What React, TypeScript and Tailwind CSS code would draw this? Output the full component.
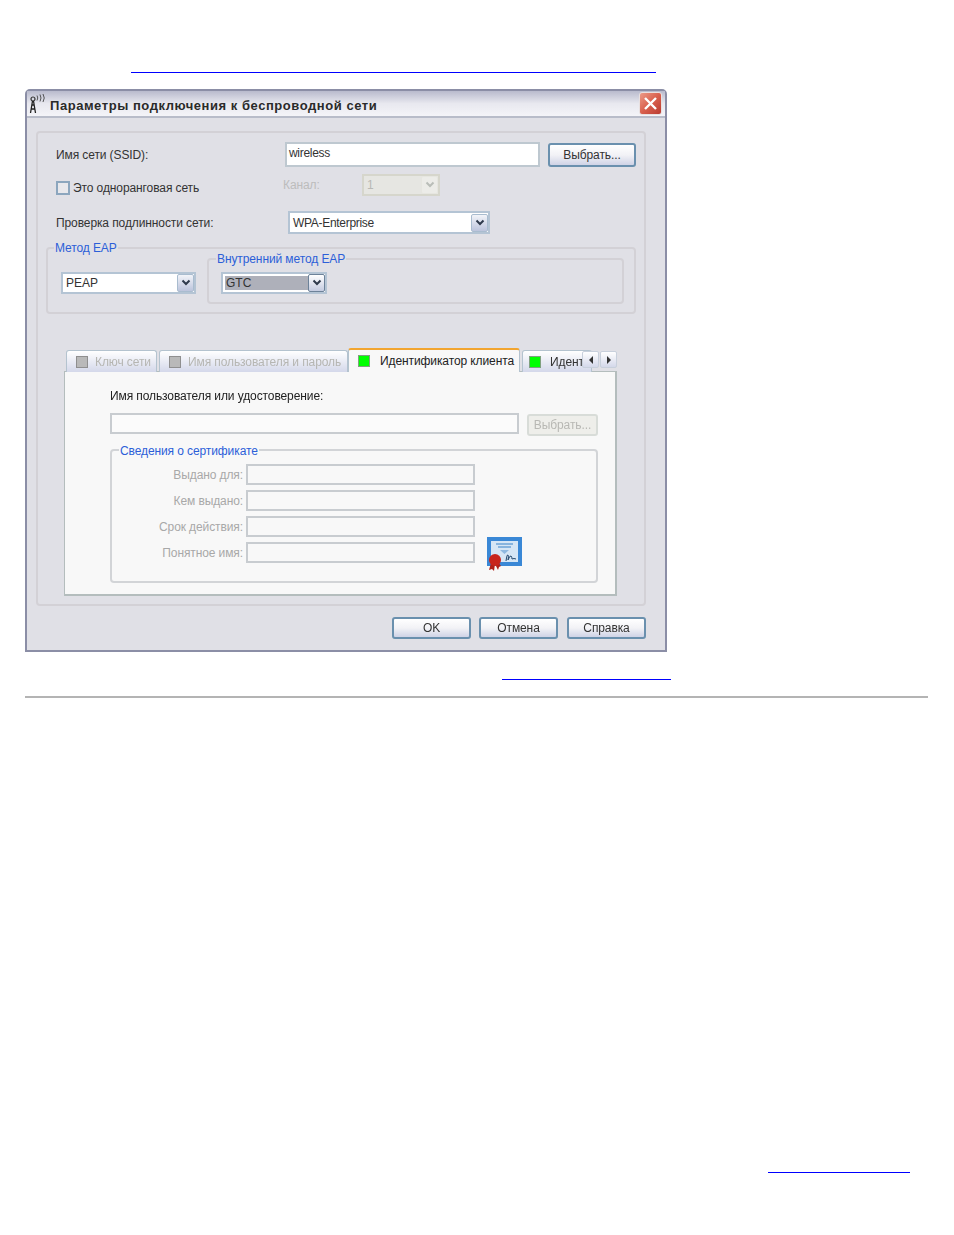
import type { ReactNode } from 'react';

function ComboBox({ value, width, disabled, selected }: { value: ReactNode; width: string; disabled?: boolean; selected?: boolean }) {
  return (
    <div className={`${width} h-full flex items-center p-[2px] border-2 ${disabled ? 'border-[#d6d6cc] bg-[#e6e6e2]' : 'border-[#b4c4d4] bg-white'}`}>
      <div className={`flex-1 h-full flex items-center pl-[1px] text-[12px] tracking-normal ${disabled ? 'text-[#b8b8b4]' : 'text-[#333]'} ${selected ? 'bg-[#aeb0ba]' : ''}`}>
        {value}
      </div>
      <div className={`w-[17px] h-[18px] -mr-[2px] flex items-center justify-center rounded-[2px] border ${disabled ? 'border-[#e6e6e0] bg-[#ecece8]' : selected ? 'border-[#6d8299] bg-gradient-to-b from-white to-[#c4cbe0]' : 'border-[#a9bccf] bg-gradient-to-b from-[#f2f4f9] to-[#bcc4dc]'}`}>
        <svg width="10" height="8" viewBox="0 0 10 8" fill="none" stroke={disabled ? '#b9bdb8' : '#2f3a4c'} strokeWidth="2">
          <path d="M1.500 1.500 5 5l3.500-3.500" />
        </svg>
      </div>
    </div>
  );
}

function PushButton({ label, width, height = 'h-[22px]' }: { label: string; width: string; height?: string }) {
  return (
    <button className={`${width} ${height} rounded-[3px] border-2 border-[#6a90ae] bg-gradient-to-b from-white via-[#f2f2f6] to-[#cfd3e6] text-[12px] text-[#333] flex items-center justify-center`}>
      {label}
    </button>
  );
}

function GroupBox({ title, className, titleClass = '-top-[9px] left-[6px]', children }: { title: string; className: string; titleClass?: string; children?: ReactNode }) {
  return (
    <div className={`relative shrink-0 rounded-[4px] border-2 ${className}`}>
      <span className={`absolute ${titleClass} px-[1px] bg-inherit text-[12px] leading-[16px] text-[#2c5fd8] whitespace-nowrap`}>{title}</span>
      {children}
    </div>
  );
}

function Tab({ label, width, on }: { label: string; width: string; on?: boolean }) {
  return (
    <div className={`${width} h-[22px] shrink-0 flex items-center rounded-t-[3px] border border-b-0 border-[#b4c3cf] bg-gradient-to-b from-white to-[#d4d8ea] text-[12px] whitespace-nowrap overflow-hidden ${on ? 'pl-[6px] text-[#333]' : 'pl-[9px] text-[#b6b6b2]'}`}>
      <span className={`w-[12px] h-[12px] shrink-0 border ${on ? 'bg-[#00ff00] border-[#7fa07f]' : 'bg-[#b9b9b9] border-[#8f8f8f]'}`} />
      <span className={on ? 'ml-[9px]' : 'ml-[7px]'}>{label}</span>
    </div>
  );
}

function CertField({ label }: { label: string }) {
  return (
    <div className="flex h-[21px] items-center">
      <span className="w-[131px] text-right text-[12px] text-[#a8a8a8]">{label}</span>
      <div className="ml-[3px] w-[229px] h-full border-2 border-[#c8ccd0] bg-[#f8f8f8]" />
    </div>
  );
}

export default function App() {
  return (
    <div className="w-[954px] h-[1235px] bg-white flex flex-col items-start tracking-[-0.1px] font-['Liberation_Sans',Arial,sans-serif]">
      <a className="block ml-[131px] mt-[72px] w-[525px] h-px bg-[#0000ff]" href="#" />

      <div className="ml-[25px] mt-[16px] w-[642px] h-[563px] flex flex-col shrink-0 rounded-t-[5px] border-2 border-[#8b8ea6] bg-[#e0e0e6] [filter:blur(0.6px)]">
        <div className="h-[27px] shrink-0 flex items-center bg-gradient-to-b from-[#b9bbcd] via-[#e8e8ef] to-[#f4f4f8] border-b-2 border-[#b8bcc9]">
          <svg className="ml-[1px] shrink-0" width="19" height="20" viewBox="0 0 19 20" fill="none">
            <circle cx="5" cy="5" r="2" stroke="#333" strokeWidth="1.2" />
            <path d="M4.500 7 2.500 19M5.500 7l2 12M4 11h2M3.500 15h3" stroke="#222" strokeWidth="1.3" />
            <path d="M9 1.500q1.500 2.500 0 5M12 .5q2 3.500 0 7M15 0q2.500 4 0 8" stroke="#444" strokeWidth="0.9" />
          </svg>
          <span className="ml-[3px] mt-[4px] text-[13px] font-bold tracking-[0.55px] text-[#2a2a2a] whitespace-nowrap">Параметры подключения к беспроводной сети</span>
          <div className="ml-auto mr-[3px] w-[23px] h-[23px] flex items-center justify-center rounded-[3px] border border-[#e8e0e0] bg-gradient-to-br from-[#ec9a88] via-[#d9604e] to-[#b93a30]">
            <svg width="15" height="15" viewBox="0 0 15 15" stroke="#fff" strokeWidth="2.4"><path d="m2 2 11 11M13 2 2 13" /></svg>
          </div>
        </div>

        <div className="ml-[9px] mt-[13px] w-[610px] h-[475px] shrink-0 flex flex-col rounded-[4px] border-2 border-[#d3d1d6]">
          <div className="mt-[9px] pl-[18px] h-[25px] flex items-center text-[12px] text-[#333]">
            <span className="w-[229px]">Имя сети (SSID):</span>
            <div className="w-[255px] h-full pl-[2px] pt-[1px] border-2 border-[#bec8d0] bg-white leading-[16px] text-[12px] tracking-[-0.3px]">wireless</div>
            <div className="ml-[8px]"><PushButton label="Выбрать..." width="w-[88px]" height="h-[24px]" /></div>
          </div>

          <div className="mt-[7px] pl-[18px] h-[22px] flex items-center text-[12px] text-[#333]">
            <div className="w-[227px] mt-[6px] flex items-center">
              <span className="w-[14px] h-[14px] border-2 border-[#8ca6be] bg-[#e8e8ec]" />
              <span className="ml-[3px]">Это одноранговая сеть</span>
            </div>
            <span className="w-[79px] text-[#bcbcbc]">Канал:</span>
            <ComboBox value="1" width="w-[78px]" disabled />
          </div>

          <div className="mt-[15px] pl-[18px] h-[23px] flex items-center text-[12px] text-[#333]">
            <span className="w-[232px]">Проверка подлинности сети:</span>
            <ComboBox value={<span className="tracking-[-0.3px]">WPA-Enterprise</span>} width="w-[202px]" />
          </div>

          <GroupBox title="Метод EAP" className="mt-[13px] ml-[8px] w-[590px] h-[67px] border-[#d3d1d6] bg-[#e0e0e6] flex items-start">
            <div className="ml-[13px] mt-[23px] h-[22px]">
              <ComboBox value="PEAP" width="w-[135px]" />
            </div>
            <GroupBox title="Внутренний метод EAP" titleClass="-top-[9px] left-[7px]" className="ml-[11px] mt-[9px] w-[417px] h-[46px] border-[#d3d1d6] bg-[#e0e0e6]">
              <div className="ml-[12px] mt-[12px] h-[22px]">
                <ComboBox value="GTC" width="w-[106px]" selected />
              </div>
            </GroupBox>
          </GroupBox>

          <div className="relative ml-[26px] mt-[34px] w-[553px] h-[24px] shrink-0 flex items-end pl-[2px] gap-[2px]">
            <Tab label="Ключ сети" width="w-[91px]" />
            <Tab label="Имя пользователя и пароль" width="w-[189px]" />
            <div className="relative z-10 -ml-[2px] w-[172px] h-[24px] shrink-0 flex items-center pl-[9px] rounded-t-[3px] border-t-2 border-x border-t-[#f2a530] border-x-[#b4c3cf] bg-[#f8f8f8] text-[12px] text-[#222] whitespace-nowrap">
              <span className="w-[12px] h-[12px] shrink-0 border border-[#7fa07f] bg-[#00ff00]" />
              <span className="ml-[10px]">Идентификатор клиента</span>
            </div>
            <Tab label="Идентификатор" width="w-[70px]" on />
            <div className="absolute right-0 top-[3px] flex gap-px">
              <div className="w-[17px] h-[17px] flex items-center justify-center rounded-[2px] border border-[#c8d0dc] bg-gradient-to-b from-white to-[#d4d8ea]">
                <svg width="6" height="8" viewBox="0 0 6 8"><path d="M5 0v8L1 4z" fill="#333" /></svg>
              </div>
              <div className="w-[17px] h-[17px] flex items-center justify-center rounded-[2px] border border-[#c8d0dc] bg-gradient-to-b from-white to-[#d4d8ea]">
                <svg width="6" height="8" viewBox="0 0 6 8"><path d="M1 0v8l4-4z" fill="#333" /></svg>
              </div>
            </div>
          </div>

          <div className="ml-[26px] -mt-px w-[553px] h-[225px] shrink-0 flex flex-col border border-b-2 border-r-2 border-[#b4bdbd] bg-[#f8f8f8]">
            <div className="mt-[16px] ml-[45px] h-[16px] text-[12px] leading-[16px] text-[#222]">Имя пользователя или удостоверение:</div>
            <div className="mt-[9px] ml-[45px] h-[23px] flex items-start">
              <div className="w-[409px] h-[21px] border-2 border-[#c8ccd0] bg-[#fbfbfb]" />
              <button className="ml-[8px] mt-[1px] w-[71px] h-[22px] rounded-[3px] border-2 border-[#d8dcd8] bg-[#eeeeea] text-[12px] text-[#b8b8b4] flex items-center justify-center">Выбрать...</button>
            </div>
            <GroupBox title="Сведения о сертификате" titleClass="-top-[8px] left-[7px]" className="ml-[45px] mt-[13px] w-[488px] h-[134px] border-[#d2d4d7] bg-[#f8f8f8] flex flex-col pt-[13px] gap-[5px]">
              <CertField label="Выдано для:" />
              <CertField label="Кем выдано:" />
              <CertField label="Срок действия:" />
              <div className="flex items-start">
                <CertField label="Понятное имя:" />
                <svg className="ml-[12px] -mt-[5px] shrink-0" width="35" height="34" viewBox="0 0 35 34">
                  <rect x="0" y="0" width="35" height="29" fill="#3a88d6" />
                  <rect x="4" y="4" width="27" height="21" fill="#d6e6f5" />
                  <path d="M9 7h17M11 10h13" stroke="#6ea4d6" strokeWidth="1.500" />
                  <path d="M13 13h9l-4.500 4z" fill="#8fb9e0" />
                  <path d="M19 24q1-7 2-6t0 5q2-5 3-4t1 3q2-1 4 0" stroke="#24496e" strokeWidth="1" fill="none" />
                  <path d="M4 26 2 33l3-1 2 2 1-7zM8 27l3 6 1-3 2-1-3-4z" fill="#b0201a" />
                  <circle cx="8" cy="23" r="6" fill="#c8241c" />
                </svg>
              </div>
            </GroupBox>
          </div>
        </div>

        <div className="mt-[11px] pr-[19px] flex justify-end gap-[8px]">
          <PushButton label="OK" width="w-[79px]" />
          <PushButton label="Отмена" width="w-[79px]" />
          <PushButton label="Справка" width="ml-[1px] w-[79px]" />
        </div>
      </div>

      <a className="block ml-[502px] mt-[27px] w-[169px] h-px bg-[#0000ff]" href="#" />
      <div className="ml-[25px] mt-[16px] w-[903px] h-[2px] bg-[#b4b4b4]" />
      <a className="block ml-[768px] mt-[474px] w-[142px] h-px bg-[#0000ff]" href="#" />
    </div>
  );
}
